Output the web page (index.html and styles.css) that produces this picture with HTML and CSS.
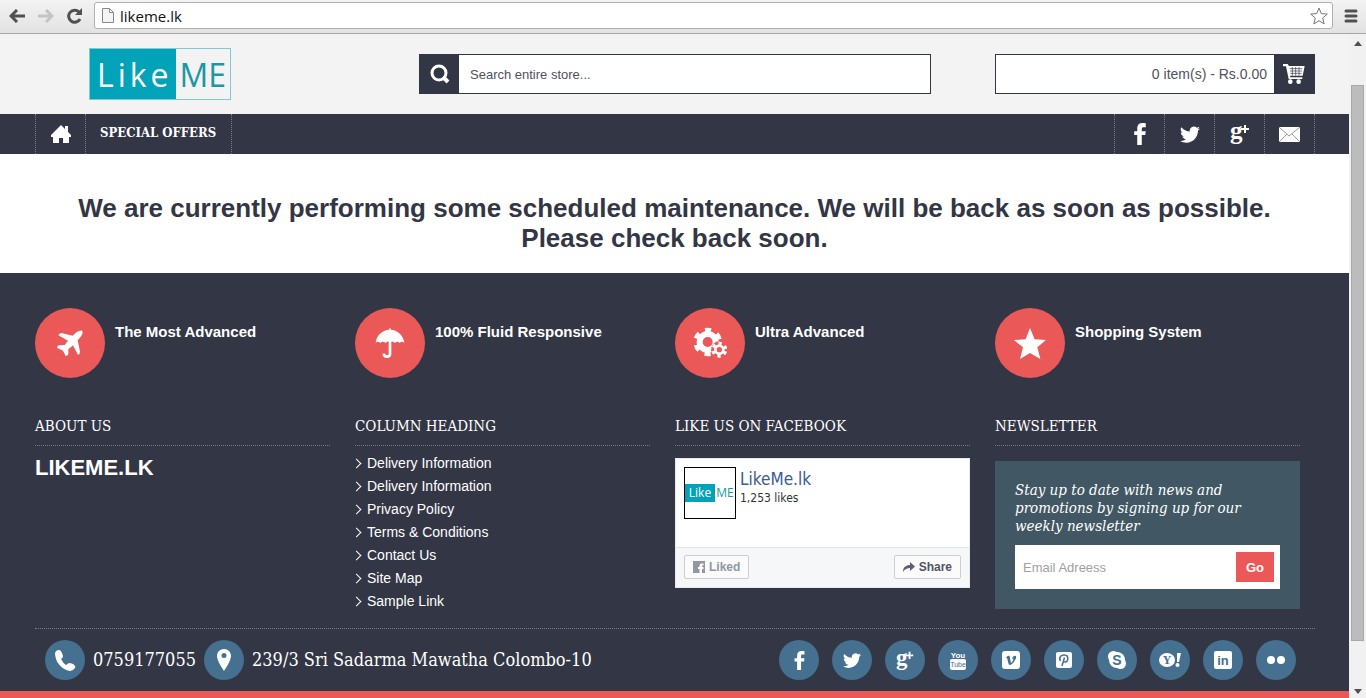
FILE: index.html
```html
<!DOCTYPE html>
<html lang="en">
<head>
  <meta charset="UTF-8" />
  <meta name="viewport" content="width=device-width, initial-scale=1" />
  <title>LikeMe.lk</title>
  <link rel="stylesheet" href="styles.css">
</head>
<body>
  <!-- shared icons -->
  <svg class="sprite" aria-hidden="true">
    <symbol id="i-facebook" viewBox="0 0 16 16">
      <path d="M9.3 16V8.8h2.5l.4-2.8H9.3V4.4C9.3 3.3 9.7 3 10.7 3H12.2V.2C11.7.1 10.8 0 9.8 0C7.4 0 6 1.3 6 3.7V6H3.8V8.8H6V16z"/>
    </symbol>
    <symbol id="i-twitter" viewBox="0 0 16 16">
      <path d="M5.026 15c6.038 0 9.341-5.003 9.341-9.334 0-.14 0-.282-.006-.422A6.7 6.7 0 0 0 16 3.542a6.7 6.7 0 0 1-1.889.518 3.3 3.3 0 0 0 1.447-1.817 6.5 6.5 0 0 1-2.087.793A3.286 3.286 0 0 0 7.875 6.03a9.32 9.32 0 0 1-6.767-3.429 3.29 3.29 0 0 0 1.018 4.382A3.3 3.3 0 0 1 .64 6.575v.045a3.29 3.29 0 0 0 2.632 3.218 3.2 3.2 0 0 1-.865.115 3 3 0 0 1-.614-.057 3.28 3.28 0 0 0 3.067 2.277A6.6 6.6 0 0 1 .78 13.58a6 6 0 0 1-.78-.045A9.34 9.34 0 0 0 5.026 15"/>
    </symbol>
  </svg>

  <div class="toolbar">
    <button type="button" class="tool" aria-label="Back">
      <svg width="16" height="14" viewBox="0 0 16 14"><path d="M8 1L2 7l6 6M2 7h14" fill="none" stroke="#505050" stroke-width="3"/></svg>
    </button>
    <button type="button" class="tool" aria-label="Forward">
      <svg width="16" height="14" viewBox="0 0 16 14"><path d="M8 1l6 6-6 6M14 7H0" fill="none" stroke="#c4c4c4" stroke-width="3"/></svg>
    </button>
    <button type="button" class="tool" aria-label="Reload">
      <svg width="16" height="16" viewBox="0 0 16 16"><path d="M13 11a6 6 0 1 1-1-7" fill="none" stroke="#505050" stroke-width="3"/><path d="M15 0v7H8z" fill="#505050"/></svg>
    </button>
    <div class="address">
      <svg width="12" height="15" viewBox="0 0 12 15"><path d="M.5.5h7l4 4v10H.5zM7.5.5v4h4" fill="#f4f4f4" stroke="#888"/></svg>
      <input type="text" value="likeme.lk" aria-label="Address">
      <svg width="18" height="18" viewBox="0 0 18 18"><path d="M9 1l2.3 5.6 6 .5-4.6 3.9 1.5 5.9L9 13.7l-5.2 3.2 1.5-5.9L.7 7.1l6-.5z" fill="#fff" stroke="#777"/></svg>
    </div>
    <button type="button" class="tool" aria-label="Menu">
      <svg width="14" height="14" viewBox="0 0 14 14"><path d="M2 2h10M2 7h10M2 12h10" stroke="#505050" stroke-width="3" stroke-linecap="round"/></svg>
    </button>
  </div>

  <div class="window">
    <div class="page">
      <header class="header">
        <a href="#" class="logo"><span class="logo-like">Like</span><span class="logo-me">ME</span></a>
        <form class="search">
          <button type="submit" aria-label="Search">
            <svg width="20" height="20" viewBox="0 0 20 20"><circle cx="9" cy="9" r="7" fill="none" stroke="#fff" stroke-width="3"/><path d="M13 13l5 5" stroke="#fff" stroke-width="4"/></svg>
          </button>
          <input type="text" placeholder="Search entire store..." aria-label="Search entire store">
        </form>
        <a href="#" class="cart">
          <span class="cart-total">0 item(s) - Rs.0.00</span>
          <span class="cart-icon">
            <svg width="22" height="20" viewBox="0 0 66 60">
              <path d="M0 0h14l4 6h47l-6 29H21l1 5h36v5H17L9 7H0z" fill="#fff"/>
              <path d="M20 14h38M21 21h36M22 28h34M28 9v26M38 9v26M48 9v26" stroke="#333645" stroke-width="2"/>
              <circle cx="22" cy="53" r="7" fill="#fff"/><circle cx="47" cy="53" r="7" fill="#fff"/>
            </svg>
          </span>
        </a>
      </header>

      <nav class="nav">
        <a href="#" class="nav-icon" aria-label="Home">
          <svg width="20" height="18" viewBox="0 0 20 18"><path d="M10 0l4 4V1h3v6l3 3v2h-2v6h-6v-5H8v5H2v-6H0v-2z"/></svg>
        </a>
        <a href="#" class="nav-link">SPECIAL OFFERS</a>
        <div class="nav-social">
          <a href="#" class="nav-icon" aria-label="Facebook"><svg width="22" height="22"><use href="#i-facebook"/></svg></a>
          <a href="#" class="nav-icon" aria-label="Twitter"><svg width="20" height="20"><use href="#i-twitter"/></svg></a>
          <a href="#" class="nav-icon" aria-label="Google Plus">
            <svg width="22" height="30" viewBox="0 0 22 30"><text x="1" y="20" class="serif" font-size="25">g</text><path d="M15 6h2v3h3v2h-3v3h-2v-3h-3V9h3z"/></svg>
          </a>
          <a href="#" class="nav-icon" aria-label="Email">
            <svg width="21" height="15" viewBox="0 0 21 15"><path d="M0 0h21v15H0z"/><path d="M0 0l10 9L21 0M0 15l8-8M21 15l-8-8" fill="none" stroke="#99a"/></svg>
          </a>
        </div>
      </nav>

      <main class="message">
        <h1>We are currently performing some scheduled maintenance. We will be back as soon as possible. Please check back soon.</h1>
      </main>

      <footer class="footer">
        <div class="grid features">
          <div class="feature">
            <span class="circle"><svg width="28" height="28" viewBox="110 112 84 84"><path d="M189 117Q192 124 186 133L175 146 182 180Q182 187 176 190L161 161 147 173 147 187Q145 193 139 193L131 177 113 168Q114 162 119 161L136 160 146 147 117 131Q119 125 126 124L160 132 171 122Q181 116 189 117Z"/></svg></span>
            <h2>The Most Advanced</h2>
          </div>
          <div class="feature">
            <span class="circle"><svg width="30" height="30" viewBox="106 115 90 90"><path d="M108 160C110 135 130 121 149 120V116H153V120C172 121 192 136 194 160Q187 152 180 160 173 152 166 160 158 152 151 158 144 152 137 160 130 152 122 160 115 152 108 160Z"/><path d="M151 155V192C151 204 133 204 132 192" fill="none" stroke="#fff" stroke-width="8"/></svg></span>
            <h2>100% Fluid Responsive</h2>
          </div>
          <div class="feature">
            <span class="circle"><svg width="34" height="34" viewBox="99 109 102 102">
              <circle cx="143" cy="157" r="24" fill="none" stroke="#fff" stroke-width="18"/>
              <circle cx="143" cy="157" r="36" fill="none" stroke="#fff" stroke-width="14" stroke-dasharray="18 19.7" stroke-dashoffset="-9.85"/>
              <circle cx="178" cy="180" r="25" fill="#eb5858"/>
              <circle cx="178" cy="180" r="12" fill="none" stroke="#fff" stroke-width="8"/>
              <circle cx="178" cy="180" r="18" fill="none" stroke="#fff" stroke-width="12" stroke-dasharray="9 9.85" stroke-dashoffset="-4.92"/>
            </svg></span>
            <h2>Ultra Advanced</h2>
          </div>
          <div class="feature">
            <span class="circle"><svg width="32" height="31" viewBox="101 110 96 93"><path d="M149 110L163 144 197 146 171 168 180 203 149 185 119 203 128 168 101 146 136 144Z"/></svg></span>
            <h2>Shopping System</h2>
          </div>
        </div>

        <div class="grid columns">
          <section class="column">
            <h3>ABOUT US</h3>
            <p class="brand">LIKEME.LK</p>
          </section>

          <section class="column">
            <h3>COLUMN HEADING</h3>
            <ul class="links">
              <li><a href="#">Delivery Information</a></li>
              <li><a href="#">Delivery Information</a></li>
              <li><a href="#">Privacy Policy</a></li>
              <li><a href="#">Terms &amp; Conditions</a></li>
              <li><a href="#">Contact Us</a></li>
              <li><a href="#">Site Map</a></li>
              <li><a href="#">Sample Link</a></li>
            </ul>
          </section>

          <section class="column">
            <h3>LIKE US ON FACEBOOK</h3>
            <div class="fb">
              <div class="fb-top">
                <div class="fb-avatar"><span class="logo-like">Like</span><span class="logo-me">ME</span></div>
                <div>
                  <a href="#" class="fb-name">LikeMe.lk</a>
                  <div class="fb-likes">1,253 likes</div>
                </div>
              </div>
              <div class="fb-bottom">
                <button type="button" class="fb-liked">
                  <svg width="12" height="12" viewBox="0 0 12 12"><path d="M0 0h12v12H0z" fill="#9197a3"/><path d="M6.5 12V8H5V6h1.5V5C6.5 3 7.5 2.5 9 2.5h1.5v2H9.5C9 4.5 9 4.6 9 5v1h1.5v2H9v4z" fill="#fff"/></svg>
                  Liked
                </button>
                <button type="button">
                  <svg width="12" height="12" viewBox="0 0 12 12"><path d="M0 11C0 6 3 4 7 4V1l5 4.5L7 10V7C4 7 2 8 0 11z" fill="#5a6070"/></svg>
                  Share
                </button>
              </div>
            </div>
          </section>

          <section class="column">
            <h3>NEWSLETTER</h3>
            <form class="newsletter">
              <p>Stay up to date with news and promotions by signing up for our weekly newsletter</p>
              <div class="field">
                <input type="email" placeholder="Email Adreess" aria-label="Email">
                <button type="submit">Go</button>
              </div>
            </form>
          </section>
        </div>

        <div class="contacts">
          <span class="dot"><svg width="24" height="24" viewBox="0 0 24 24"><path d="M2 5Q3 2 6 2Q8 2 9 5L10 8Q10 10 8 11Q10 15 13 17Q15 15 17 15L20 16Q23 18 22 20Q20 23 17 23C9 22 2 14 2 5Z"/></svg></span>
          <span class="contact">0759177055</span>
          <span class="dot"><svg width="24" height="24" viewBox="0 0 24 24"><path d="M12 1C8 1 5 4 5 8c0 5 7 15 7 15s7-10 7-15c0-4-3-7-7-7zm0 9a2.5 2.5 0 0 1 0-5 2.5 2.5 0 0 1 0 5z"/></svg></span>
          <span class="contact">239/3 Sri Sadarma Mawatha Colombo-10</span>

          <div class="social">
            <a href="#" class="dot" aria-label="Facebook"><svg width="19" height="19"><use href="#i-facebook"/></svg></a>
            <a href="#" class="dot" aria-label="Twitter"><svg width="18" height="18"><use href="#i-twitter"/></svg></a>
            <a href="#" class="dot" aria-label="Google Plus">
              <svg width="20" height="28" viewBox="0 0 22 30"><text x="1" y="20" class="serif" font-size="25">g</text><path d="M15 6h2v3h3v2h-3v3h-2v-3h-3V9h3z"/></svg>
            </a>
            <a href="#" class="dot" aria-label="YouTube">
              <svg width="20" height="20" viewBox="0 0 20 20">
                <text x="10" y="8" text-anchor="middle" class="sans" font-size="8">You</text>
                <rect x="2" y="9" width="16" height="11" rx="2"/>
                <text x="10" y="17" text-anchor="middle" class="cut" font-size="7">Tube</text>
              </svg>
            </a>
            <a href="#" class="dot" aria-label="Vimeo">
              <svg width="18" height="18" viewBox="0 0 18 18"><rect width="18" height="18" rx="3"/><path d="M4 6.5C6 4 8 4 8 7l1 5c1.5-1 3-4 2-4.5l-1 .3C11 4 15 3.5 14 7c-1 3-4 7-6 7-2 0-2-5-3-7z" class="cut"/></svg>
            </a>
            <a href="#" class="dot" aria-label="Pinterest">
              <svg width="16" height="16" viewBox="0 0 16 16"><rect width="16" height="16" rx="2"/><path d="M4.5 9C2 5 6 2.5 9 3c4 .5 3.5 7 0 7C8 10 7.5 9.5 7.3 9M8.5 5.5L6 14" fill="none" stroke="#45708f" stroke-width="1.5"/></svg>
            </a>
            <a href="#" class="dot" aria-label="Skype">
              <svg width="18" height="18" viewBox="0 0 18 18"><circle cx="5.5" cy="5.5" r="5.5"/><circle cx="12.5" cy="12.5" r="5.5"/><circle cx="9" cy="9" r="8"/><text x="9" y="14" text-anchor="middle" font-size="14" class="sans cut">S</text></svg>
            </a>
            <a href="#" class="dot" aria-label="Yahoo">
              <svg width="22" height="16" viewBox="0 0 22 16"><ellipse cx="8" cy="8" rx="8" ry="7"/><text x="8" y="12" text-anchor="middle" font-size="12" class="serif cut">Y</text><path d="M18 1h4l-2 9h-2z"/><circle cx="18.5" cy="13" r="2"/></svg>
            </a>
            <a href="#" class="dot" aria-label="LinkedIn">
              <svg width="18" height="18" viewBox="0 0 18 18"><rect width="18" height="18" rx="2"/><text x="9" y="14" text-anchor="middle" font-size="13" class="sans cut">in</text></svg>
            </a>
            <a href="#" class="dot" aria-label="Flickr"><svg width="20" height="10" viewBox="0 0 20 10"><circle cx="5" cy="5" r="4"/><circle cx="15" cy="5" r="4"/></svg></a>
          </div>
        </div>
      </footer>
      <div class="stripe"></div>
    </div>

    <div class="scrollbar">
      <svg width="8" height="5" viewBox="0 0 8 5"><path d="M0 5l4-5 4 5z" fill="#505050"/></svg>
      <div class="thumb"></div>
      <svg width="8" height="5" viewBox="0 0 8 5"><path d="M0 0l4 5 4-5z" fill="#505050"/></svg>
    </div>
  </div>
</body>
</html>
```
FILE: styles.css
```css
* { box-sizing: border-box; }

body {
  margin: 0;
  height: 100vh;
  display: flex;
  flex-direction: column;
  overflow: hidden;
  font-family: "Liberation Sans", Arial, sans-serif;
  font-size: 14px;
  color: #333645;
}

h1, h2, h3, p, ul { margin: 0; }

a {
  color: inherit;
  text-decoration: none;
}

button, input {
  font-family: inherit;
  border: none;
  border-radius: 0;
  padding: 0;
  outline: none;
}

button { cursor: pointer; }

svg { flex-shrink: 0; }

.sprite {
  position: absolute;
  width: 0;
  height: 0;
}

.serif {
  font-family: "Liberation Serif", serif;
  font-weight: bold;
}

.sans { font-weight: bold; }

/* browser bar */

.toolbar {
  display: flex;
  align-items: center;
  gap: 13px;
  height: 34px;
  padding: 0 8px 2px 9px;
  background: linear-gradient(#f3f3f3, #e2e2e2);
  border-bottom: 1px solid #a6a6a6;
}

.tool {
  display: flex;
  background: none;
}

.address {
  flex: 1;
  display: flex;
  align-items: center;
  gap: 6px;
  height: 27px;
  margin: 0 -2px;
  padding: 0 4px 0 7px;
  background: #fff;
  border: 1px solid #b0b0b0;
  border-radius: 3px;
}

.address input {
  flex: 1;
  font-family: "Open Sans", sans-serif;
  font-size: 15px;
  color: #111;
}

.window {
  flex: 1;
  min-height: 0;
  display: flex;
}

.page {
  flex: 1;
  min-width: 0;
  overflow: hidden;
}

.scrollbar {
  display: flex;
  flex-direction: column;
  align-items: center;
  width: 17px;
  padding: 7px 2px 4px;
  background: #f1f1f1;
}

.thumb {
  width: 13px;
  flex: 1;
  margin: 39px 0 48px;
  background: #bcbcbc;
  border: 1px solid #a8a8a8;
}

/* header */

.header {
  display: flex;
  align-items: center;
  height: 80px;
  padding: 0 34px 0 35px;
  background: #f3f3f3;
}

.logo {
  display: flex;
  width: 142px;
  height: 52px;
  margin: 0 auto 0 54px;
  font-family: "Open Sans", sans-serif;
  font-size: 32px;
  line-height: 52px;
  border: 1px solid #7fcbd4;
}

.logo-like {
  flex: 3;
  text-align: center;
  color: #fff;
  background: #02a2b8;
}

.logo .logo-like {
  letter-spacing: 4px;
  padding-left: 4px;
}

.logo-me {
  flex: 2;
  text-align: center;
  color: #1b97a6;
}

.search {
  display: flex;
  width: 40%;
  height: 40px;
  border: 1px solid #333645;
}

.search button {
  display: flex;
  align-items: center;
  justify-content: center;
  width: 39px;
  background: #333645;
}

.search input {
  flex: 1;
  padding-left: 11px;
  font-size: 13px;
}

.search input::placeholder { color: #50525e; }

.cart {
  display: flex;
  width: 25%;
  height: 40px;
  margin-left: 5%;
  line-height: 38px;
  background: #fff;
  border: 1px solid #333645;
}

.cart-total {
  flex: 1;
  padding-right: 7px;
  text-align: right;
  color: #50525e;
}

.cart-icon {
  display: flex;
  align-items: center;
  justify-content: center;
  width: 40px;
  background: #333645;
}

/* nav */

.nav {
  display: flex;
  height: 40px;
  padding: 0 34px 0 35px;
  background: #333645;
  color: #fff;
}

.nav svg, .footer svg { fill: #fff; }

.nav-icon {
  display: flex;
  align-items: center;
  justify-content: center;
  width: 50px;
  border-left: 1px dotted #777a88;
}

.nav-link {
  padding: 0 15px 0 14px;
  font-family: "DejaVu Serif Condensed", "DejaVu Serif", serif;
  font-size: 13px;
  font-weight: bold;
  line-height: 38px;
  border-left: 1px dotted #777a88;
  border-right: 1px dotted #777a88;
}

.nav-social {
  display: flex;
  margin-left: auto;
  border-right: 1px dotted #777a88;
}

.message {
  padding: 39px 60px 20px;
  text-align: center;
}

.message h1 {
  font-size: 26px;
  line-height: 30px;
}

/* footer */

.footer {
  padding: 35px 34px 11px 35px;
  background: #333645;
  color: #fff;
}

.grid {
  display: grid;
  grid-template-columns: repeat(4, 1fr);
}

.feature {
  display: flex;
  gap: 10px;
}

.circle {
  display: flex;
  align-items: center;
  justify-content: center;
  width: 70px;
  height: 70px;
  border-radius: 50%;
  background: #eb5858;
}

.feature h2 {
  padding-top: 15px;
  font-size: 15px;
  line-height: 18px;
}

.columns { margin-top: 39px; }

.column { padding-right: 25px; }

.column:last-child { padding-right: 15px; }

.column h3 {
  padding-bottom: 10px;
  font-family: "DejaVu Serif Condensed", "DejaVu Serif", serif;
  font-size: 15px;
  font-weight: normal;
  line-height: 18px;
  border-bottom: 1px dotted #777a88;
}

.brand {
  padding-top: 10px;
  font-size: 22px;
  font-weight: bold;
  line-height: 24px;
}

.links {
  padding: 6px 0 0;
  list-style: none;
}

.links li {
  display: flex;
  align-items: center;
  gap: 7px;
  line-height: 23px;
}

.links li::before {
  content: "";
  width: 6px;
  height: 6px;
  margin-left: -2px;
  border: solid #fff;
  border-width: 1px 1px 0 0;
  transform: rotate(45deg);
}

.fb {
  margin-top: 12px;
  background: #fff;
  border: 1px solid #e9eaed;
}

.fb-top {
  display: flex;
  gap: 4px;
  height: 88px;
  padding: 8px;
}

.fb-avatar {
  display: flex;
  align-items: center;
  width: 52px;
  height: 52px;
  font-family: "Open Sans", sans-serif;
  font-size: 12px;
  line-height: 18px;
  border: 1px solid #000;
}

.fb-name {
  font-family: "DejaVu Sans Condensed", "DejaVu Sans", sans-serif;
  font-size: 17px;
  line-height: 25px;
  color: #3b5998;
}

.fb-likes {
  font-family: "DejaVu Sans Condensed", "DejaVu Sans", sans-serif;
  font-size: 12px;
  line-height: 12px;
  color: #333;
}

.fb-bottom {
  display: flex;
  justify-content: space-between;
  height: 40px;
  padding: 7px 8px;
  background: #f6f7f8;
  border-top: 1px solid #e2e3e6;
}

.fb-bottom button {
  display: flex;
  align-items: center;
  gap: 4px;
  height: 24px;
  padding: 0 8px;
  font-size: 12px;
  font-weight: bold;
  color: #4e5665;
  background: #fbfbfc;
  border: 1px solid #cdced2;
  border-radius: 2px;
}

.fb-bottom .fb-liked { color: #9197a3; }

.newsletter {
  margin-top: 15px;
  padding: 20px;
  background: #415763;
}

.newsletter p {
  margin-bottom: 10px;
  font-family: "DejaVu Serif Condensed", "DejaVu Serif", serif;
  font-size: 15px;
  font-style: italic;
  line-height: 18px;
}

.field {
  display: flex;
  height: 44px;
  padding: 7px 6px 7px 8px;
  background: #fff;
}

.field input {
  flex: 1;
  min-width: 0;
  font-size: 13px;
}

.field input::placeholder { color: #a0a0a0; }

.field button {
  width: 38px;
  font-size: 13px;
  font-weight: bold;
  color: #fff;
  background: #eb5858;
}

.contacts {
  display: flex;
  align-items: center;
  gap: 8px;
  margin-top: 15px;
  padding: 11px 19px 0 10px;
  border-top: 1px dotted #777a88;
}

.dot {
  display: flex;
  align-items: center;
  justify-content: center;
  width: 40px;
  height: 40px;
  border-radius: 50%;
  background: #45708f;
}

.contact {
  font-family: "DejaVu Serif Condensed", "DejaVu Serif", serif;
  font-size: 18px;
  line-height: 40px;
}

.social {
  display: flex;
  gap: 13px;
  margin-left: auto;
}

.social .cut { fill: #45708f; }

.stripe {
  height: 20px;
  background: #eb5858;
}
```
